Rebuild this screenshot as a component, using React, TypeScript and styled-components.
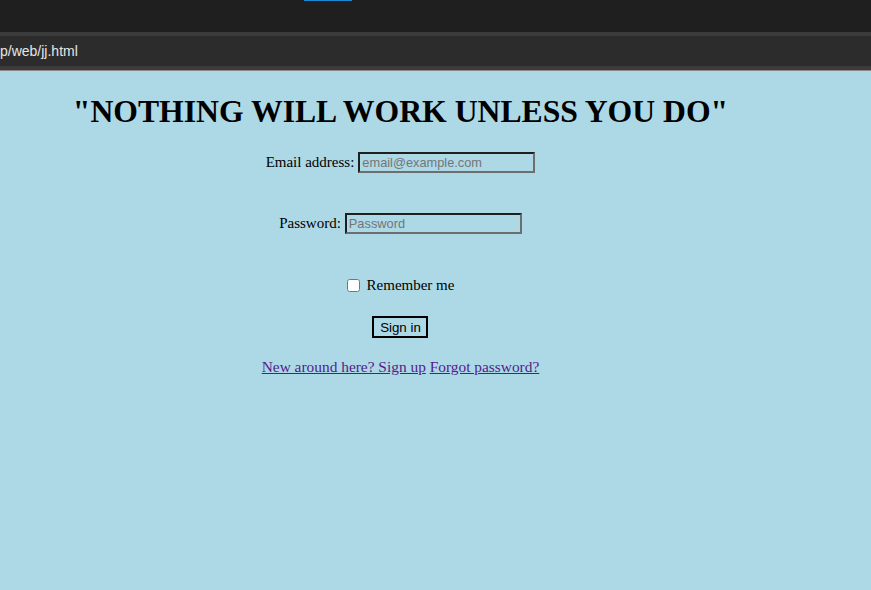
import React from "react";
import styled, { createGlobalStyle } from "styled-components";

const GlobalStyle = createGlobalStyle`
  html, body {
    margin: 0;
    padding: 0;
    background: #add8e6;
  }
  body {
    font-family: "Liberation Serif", "Times New Roman", serif;
    font-size: 16px;
    color: #000;
  }
`;

const App: React.FC = () => {
  return (
    <>
      <GlobalStyle />
      <Chrome>
        <TabStrip>
          <TabMarker />
        </TabStrip>
        <AddressBar>
          <Url>p/web/jj.html</Url>
        </AddressBar>
      </Chrome>
      <Page>
        <Heading>"NOTHING WILL WORK UNLESS YOU DO"</Heading>
        <Form>
          <Row>
            <Label htmlFor="email">Email address:</Label>
            <TextInput id="email" type="email" placeholder="email@example.com" />
          </Row>
          <Row $top={39}>
            <Label htmlFor="password">Password:</Label>
            <TextInput id="password" type="password" placeholder="Password" />
          </Row>
          <Row $top={40} $gap={7}>
            <Check type="checkbox" id="remember" />
            <Label htmlFor="remember">Remember me</Label>
          </Row>
          <Row $top={20}>
            <SignIn type="button">Sign in</SignIn>
          </Row>
          <LinkRow>
            <Anchor href="#">New around here? Sign up</Anchor>{" "}
            <Anchor href="#">Forgot password?</Anchor>
          </LinkRow>
        </Form>
      </Page>
    </>
  );
};

export default App;

const Chrome = styled.header`
  background: #1f1f1f;
  border-bottom: 1px solid #8a8a8a;
`;

const TabStrip = styled.div`
  height: 32px;
  position: relative;
`;

const TabMarker = styled.div`
  position: absolute;
  left: 304px;
  top: 0;
  width: 48px;
  height: 1px;
  background: #1a8ad4;
`;

const AddressBar = styled.div`
  height: 30px;
  background: #2c2c2c;
  border-top: 4px solid #3b3b3b;
  border-bottom: 4px solid #3b3b3b;
  display: flex;
  align-items: center;
`;

const Url = styled.span`
  font-family: "Liberation Sans", Arial, sans-serif;
  font-size: 14px;
  color: #e6e6e6;
`;

const Page = styled.main`
  width: 785px;
  margin-left: 8px;
  padding-top: 22px;
  padding-bottom: 40px;
  display: flex;
  flex-direction: column;
  align-items: center;
`;

const Heading = styled.h1`
  margin: 0;
  font-family: "Liberation Serif", "Times New Roman", serif;
  font-size: 31.7px;
  font-weight: bold;
  line-height: 37px;
`;

const Form = styled.form`
  margin-top: 21px;
  display: flex;
  flex-direction: column;
  align-items: center;
`;

const Row = styled.div<{ $top?: number; $gap?: number }>`
  display: flex;
  align-items: center;
  gap: ${(p) => p.$gap ?? 4}px;
  height: 22px;
  margin-top: ${(p) => p.$top ?? 0}px;
`;

const Label = styled.label`
  font-size: 15px;
  line-height: 18px;
`;

const TextInput = styled.input`
  box-sizing: border-box;
  width: 177px;
  height: 21px;
  padding: 1px 2px;
  margin: 0;
  background: transparent;
  border-width: 2px;
  border-style: solid;
  border-color: #1f1f1f #6e6e6e #6e6e6e #1f1f1f;
  font-family: "Liberation Sans", Arial, sans-serif;
  font-size: 12.8px;
  color: #000;
  outline: none;

  &::placeholder {
    color: #757575;
  }
`;

const Check = styled.input`
  width: 13px;
  height: 13px;
  margin: 0;
`;

const SignIn = styled.button`
  box-sizing: border-box;
  width: 56px;
  height: 22px;
  padding: 0;
  background: transparent;
  border: 2px solid #000;
  font-family: "Liberation Sans", Arial, sans-serif;
  font-size: 13.3px;
  color: #000;
`;

const LinkRow = styled.p`
  margin: 20px 0 0;
  font-size: 15.4px;
  line-height: 18px;
`;

const Anchor = styled.a`
  color: #551a8b;
  text-decoration: underline;
`;
